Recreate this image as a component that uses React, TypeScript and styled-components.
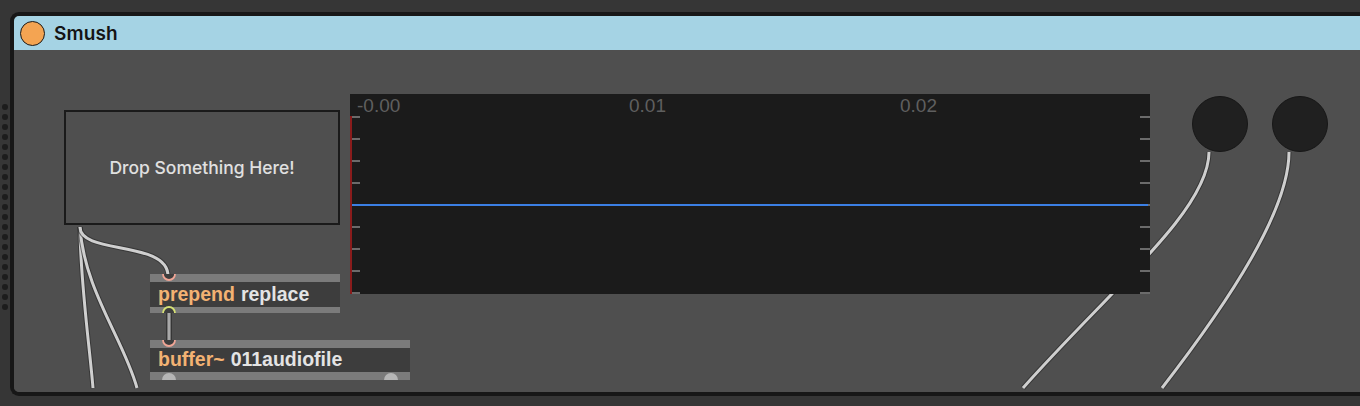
import React from "react";
import styled, { createGlobalStyle, css } from "styled-components";

const GlobalStyle = createGlobalStyle`
  html, body { margin: 0; padding: 0; background: #363636; overflow: hidden; }
  #root { width: 1360px; height: 406px; }
`;

const place = css<{ $x: number; $y: number }>`
  position: absolute;
  left: ${(p) => p.$x}px;
  top: ${(p) => p.$y}px;
`;

const Page = styled.div`
  display: flex;
  align-items: flex-start;
  width: 1360px;
  height: 406px;
  padding-top: 12px;
  box-sizing: border-box;
  overflow: hidden;
  background: #363636;
`;

const DotRail = styled.div`
  flex: none;
  width: 10px;
  display: flex;
  flex-direction: column;
  align-items: center;
  gap: 4px;
  padding-top: 92px;
`;

const Dot = styled.span`
  width: 6px;
  height: 6px;
  border-radius: 50%;
  background: #1c1c1c;
`;

const Window = styled.div`
  flex: none;
  width: 1380px;
  height: 384px;
  box-sizing: border-box;
  border: 4px solid #171717;
  border-right: none;
  border-radius: 9px 0 0 9px;
  display: flex;
  flex-direction: column;
  overflow: hidden;
  background: #4f4f4f;
`;

const TitleBar = styled.div`
  flex: none;
  height: 34px;
  background: #a5d3e4;
  display: flex;
  align-items: center;
  gap: 9px;
  padding-left: 6px;
`;

const TitleDot = styled.span`
  width: 25px;
  height: 25px;
  box-sizing: border-box;
  border-radius: 50%;
  background: #f4a452;
  border: 1.5px solid #1a1a1a;
`;

const Title = styled.span`
  font-family: Inter, "Noto Sans", sans-serif;
  font-weight: 600;
  font-size: 19px;
  color: #141414;
  letter-spacing: 0.1px;
`;

const Canvas = styled.div`
  position: relative;
  flex: 1;
  overflow: hidden;
  background: #4f4f4f;
`;

const Cords = styled.svg`
  position: absolute;
  left: 0;
  top: 0;
  width: 100%;
  height: 100%;
  pointer-events: none;
`;

const DropZone = styled.div<{ $x: number; $y: number }>`
  ${place};
  width: 276px;
  height: 115px;
  box-sizing: border-box;
  border: 2px solid #1a1a1a;
  display: flex;
  align-items: center;
  justify-content: center;
  font-family: Inter, "Noto Sans", sans-serif;
  font-weight: 500;
  font-size: 17.5px;
  color: #e0e0e0;
`;

const WavePanel = styled.div<{ $x: number; $y: number }>`
  ${place};
  width: 800px;
  height: 200px;
  background: #1b1b1b;
`;

const WaveDrawing = styled.svg`
  position: absolute;
  left: 0;
  top: 0;
`;

const AxisLabel = styled.span<{ $left: number }>`
  position: absolute;
  top: 2px;
  left: ${(p) => p.$left}px;
  font-family: "Liberation Sans", Arial, sans-serif;
  font-size: 19px;
  line-height: 1;
  color: #5f5f5f;
`;

const Knob = styled.div<{ $x: number; $y: number }>`
  ${place};
  width: 56px;
  height: 56px;
  box-sizing: border-box;
  border-radius: 50%;
  background: #202020;
  border: 1.5px solid #171717;
`;

const MaxObject = styled.div<{ $x: number; $y: number; $w: number }>`
  ${place};
  width: ${(p) => p.$w}px;
  display: flex;
  flex-direction: column;
  background: #7b7b7b;
`;

const Bar = styled.div<{ $h: number }>`
  height: ${(p) => p.$h}px;
`;

const ObjBody = styled.div<{ $h: number }>`
  height: ${(p) => p.$h}px;
  background: #3d3d3d;
  display: flex;
  align-items: center;
  padding-left: 8px;
  gap: 6px;
  font-family: "Liberation Sans", Arial, sans-serif;
  font-weight: 700;
  font-size: 19.5px;
  line-height: 1;
  white-space: nowrap;
`;

const Keyword = styled.span`
  color: #f3b273;
`;

const Arg = styled.span`
  color: #e4e4e4;
`;

const PortSvg = styled.svg<{ $left: number; $edge: "top" | "bottom" }>`
  position: absolute;
  left: ${(p) => p.$left}px;
  ${(p) => (p.$edge === "top" ? "top: 0;" : "bottom: 0;")}
  overflow: visible;
`;

type PortKind = "inlet" | "outlet" | "signal";

function Port({ kind, cx }: { kind: PortKind; cx: number }) {
  if (kind === "inlet") {
    return (
      <PortSvg $left={cx - 7} $edge="top" width={14} height={7}>
        <path d="M1 0 A6 6 0 0 0 13 0" fill="#3e3e3e" stroke="#f0a595" strokeWidth={1.8} />
      </PortSvg>
    );
  }
  if (kind === "outlet") {
    return (
      <PortSvg $left={cx - 7} $edge="bottom" width={14} height={7}>
        <path d="M1 7 A6 6 0 0 1 13 7" fill="#3e3e3e" stroke="#d6e075" strokeWidth={1.8} />
      </PortSvg>
    );
  }
  return (
    <PortSvg $left={cx - 7} $edge="bottom" width={14} height={7}>
      <path d="M0 7 A7 7 0 0 1 14 7 Z" fill="#b6b6b6" />
    </PortSvg>
  );
}

const cords = [
  "M1195 102 C1195 160, 1096 240, 1009 338",
  "M1275 102 C1275 160, 1216 250, 1148 338",
  "M66 177 C66 230, 76 300, 79 338",
  "M66 177 C70 240, 110 290, 123 338",
  "M66 177 C66 205, 154 190, 154 226",
];

const tickYs = [22, 44, 66, 88, 110, 132, 154, 176, 198];

export default function App() {
  return (
    <>
      <GlobalStyle />
      <Page>
        <DotRail>
          {Array.from({ length: 21 }).map((_, i) => (
            <Dot key={i} />
          ))}
        </DotRail>
        <Window>
          <TitleBar>
            <TitleDot />
            <Title>Smush</Title>
          </TitleBar>
          <Canvas>
            <Cords>
              {cords.map((d, i) => (
                <g key={i}>
                  <path d={d} fill="none" stroke="rgba(40,40,40,0.6)" strokeWidth={5} />
                  <path d={d} fill="none" stroke="#cfcfcf" strokeWidth={3} />
                </g>
              ))}
              <path d="M155 262 L155 292" fill="none" stroke="#2e2e2e" strokeWidth={5.5} />
              <path d="M155 262 L155 292" fill="none" stroke="#a9a9a9" strokeWidth={3.2} />
            </Cords>

            <DropZone $x={50} $y={60}>Drop Something Here!</DropZone>

            <WavePanel $x={336} $y={44}>
              <WaveDrawing width={800} height={200}>
                <rect x={0} y={22} width={2} height={178} fill="#8a1c1c" />
                {tickYs.map((y) => (
                  <g key={y}>
                    <rect x={2} y={y} width={8} height={2} fill="#6b6b6b" />
                    <rect x={790} y={y} width={10} height={2} fill="#6b6b6b" />
                  </g>
                ))}
                <rect x={2} y={110} width={796} height={2} fill="#3b7fe4" />
              </WaveDrawing>
              <AxisLabel $left={7}>-0.00</AxisLabel>
              <AxisLabel $left={279}>0.01</AxisLabel>
              <AxisLabel $left={550}>0.02</AxisLabel>
            </WavePanel>

            <Knob $x={1178} $y={46} />
            <Knob $x={1258} $y={46} />

            <MaxObject $x={136} $y={224} $w={190}>
              <Bar $h={8} />
              <ObjBody $h={25}>
                <Keyword>prepend</Keyword>
                <Arg>replace</Arg>
              </ObjBody>
              <Bar $h={6} />
              <Port kind="inlet" cx={19} />
              <Port kind="outlet" cx={19} />
            </MaxObject>

            <MaxObject $x={136} $y={290} $w={260}>
              <Bar $h={8} />
              <ObjBody $h={24}>
                <Keyword>buffer~</Keyword>
                <Arg>011audiofile</Arg>
              </ObjBody>
              <Bar $h={8} />
              <Port kind="inlet" cx={19} />
              <Port kind="signal" cx={19} />
              <Port kind="signal" cx={241} />
            </MaxObject>
          </Canvas>
        </Window>
      </Page>
    </>
  );
}
